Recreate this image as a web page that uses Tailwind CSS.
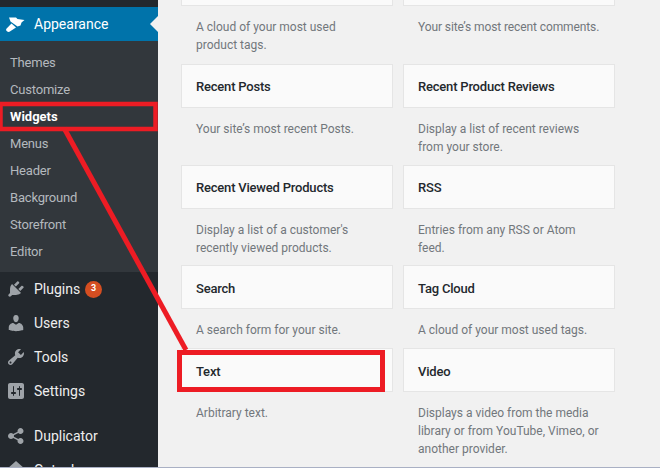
<!DOCTYPE html>
<html><head><meta charset="utf-8"><script src="https://cdn.jsdelivr.net/npm/@tailwindcss/browser@4"></script></head>
<body class="m-0">
<div class="relative flex w-[660px] h-[468px] overflow-hidden bg-[#f1f1f1] font-['Roboto','Noto_Sans',sans-serif]">
  <aside class="w-[158px] shrink-0 bg-[#23282d] text-[14px] text-[#eeeeee]">
    <div class="h-[7px]"></div>
    <div class="relative flex items-center h-[34px] bg-[#0073aa] text-white">
      <svg class="ml-[6px] w-[20px] h-[20px]" viewBox="0 0 20 20" fill="#fff"><path d="M3 3.5 L10 3.5 L11.5 5 L18.5 6 L15.5 8.5 L14.5 11.5 L11.5 12.5 L4.5 7.5 Z"/><path d="M5.5 9.5 L10 13.5 L3.5 17.8 C1.8 18.4 -0.2 17 0.2 15 Z"/></svg>
      <span class="ml-[8px]">Appearance</span>
      <span class="absolute right-0 top-[9px] w-0 h-0 border-y-[8px] border-y-transparent border-r-[8px] border-r-[#f1f1f1]"></span>
    </div>
    <div class="h-[231px] bg-[#32373c] pt-[8px] text-[13px] tracking-[-0.2px] text-[#b4b9be]">
      <div class="h-[27px] pl-[10px] leading-[27px]">Themes</div>
      <div class="h-[27px] pl-[10px] leading-[27px]">Customize</div>
      <div class="h-[27px] pl-[10px] leading-[27px] font-bold tracking-normal text-white">Widgets</div>
      <div class="h-[27px] pl-[10px] leading-[27px]">Menus</div>
      <div class="h-[27px] pl-[10px] leading-[27px]">Header</div>
      <div class="h-[27px] pl-[10px] leading-[27px]">Background</div>
      <div class="h-[27px] pl-[10px] leading-[27px]">Storefront</div>
      <div class="h-[27px] pl-[10px] leading-[27px]">Editor</div>
    </div>
    <div>
      <div class="flex items-center h-[34px]">
        <svg class="ml-[6px] w-[20px] h-[20px]" viewBox="0 0 20 20" fill="#9ea3a8"><path d="M13.11 4.36L9.87 7.6 8 5.73l3.24-3.24c.35-.34 1.05-.2 1.56.32.52.51.66 1.21.31 1.55zm-8 1.77l.91-1.12 9.01 9.01-1.19.84c-.71.71-2.63 1.16-3.82 1.16H6.14L4.9 17.26c-.59.59-1.54.59-2.12 0-.59-.58-.59-1.53 0-2.12l1.24-1.24v-3.88c0-1.13.4-3.19 1.09-3.89zm7.26 3.97l3.24-3.24c.34-.35 1.04-.21 1.55.31.52.51.66 1.21.31 1.55l-3.24 3.25z"/></svg>
        <span class="ml-[8px]">Plugins</span>
        <span class="ml-[5px] flex items-center justify-center w-[17px] h-[17px] rounded-full bg-[#d54e21] text-white text-[9px] font-bold">3</span>
      </div>
      <div class="flex items-center h-[34px]">
        <svg class="ml-[6px] w-[20px] h-[20px]" viewBox="0 0 20 20" fill="#9ea3a8"><path d="M10 9.25c-2.27 0-2.73-3.44-2.73-3.44C7 4.02 7.82 2 9.97 2c2.16 0 2.98 2.02 2.71 3.81 0 0-.41 3.44-2.68 3.44zm0 2.57L12.72 10c2.39 0 4.52 2.33 4.52 4.53v2.49s-3.65 1.13-7.24 1.13c-3.65 0-7.24-1.13-7.24-1.13v-2.49c0-2.25 1.94-4.48 4.47-4.48z"/></svg>
        <span class="ml-[8px]">Users</span>
      </div>
      <div class="flex items-center h-[34px]">
        <svg class="ml-[6px] w-[20px] h-[20px]" viewBox="0 0 20 20" fill="#9ea3a8"><path d="M16.68 9.77c-1.34 1.34-3.3 1.67-4.95.99l-5.41 6.52c-.99.99-2.59.99-3.58 0s-.99-2.59 0-3.57l6.52-5.42c-.68-1.65-.35-3.61.99-4.95 1.28-1.28 3.12-1.62 4.72-1.06l-2.89 2.89 2.82 2.82 2.86-2.87c.53 1.58.18 3.39-1.08 4.65zM3.81 16.21c.4.39 1.04.39 1.43 0 .4-.4.4-1.04 0-1.43-.39-.4-1.03-.4-1.43 0-.39.39-.39 1.03 0 1.43z"/></svg>
        <span class="ml-[8px]">Tools</span>
      </div>
      <div class="flex items-center h-[34px]">
        <svg class="ml-[6px] w-[20px] h-[20px]" viewBox="0 0 20 20" fill="#9ea3a8"><path d="M18 16V4c0-1.1-.9-2-2-2H4c-1.1 0-2 .9-2 2v12c0 1.1.9 2 2 2h12c1.1 0 2-.9 2-2zM8 11h1c.55 0 1 .45 1 1s-.45 1-1 1H8v1.5c0 .28-.22.5-.5.5s-.5-.22-.5-.5V13H6c-.55 0-1-.45-1-1s.45-1 1-1h1V5.5c0-.28.22-.5.5-.5s.5.22.5.5V11zm5-2h-1c-.55 0-1-.45-1-1s.45-1 1-1h1V5.5c0-.28.22-.5.5-.5s.5.22.5.5V7h1c.55 0 1 .45 1 1s-.45 1-1 1h-1v5.5c0 .28-.22.5-.5.5s-.5-.22-.5-.5V9z"/></svg>
        <span class="ml-[8px]">Settings</span>
      </div>
      <div class="h-[11px]"></div>
      <div class="flex items-center h-[34px]">
        <svg class="ml-[6px] w-[20px] h-[20px]" viewBox="0 0 20 20" fill="#9ea3a8"><path d="M14.5 12q1.24 0 2.12.88T17.5 15t-.88 2.12-2.12.88-2.12-.88T11.5 15q0-.34.09-.69l-4.38-2.3Q6.32 13 5 13q-1.24 0-2.12-.88T2 10t.88-2.12T5 7q1.3 0 2.21.99l4.38-2.3q-.09-.35-.09-.69 0-1.24.88-2.12T14.5 2t2.12.88T17.5 5t-.88 2.12T14.5 8q-1.3 0-2.21-.99l-4.38 2.3Q8 9.66 8 10t-.09.69l4.38 2.3Q13.2 12 14.5 12z"/></svg>
        <span class="ml-[8px]">Duplicator</span>
      </div>
      <div class="flex items-center h-[34px]">
        <svg class="ml-[6px] w-[20px] h-[20px]" viewBox="0 0 20 20" fill="#9ea3a8"><path d="M10 1 L19 9 V19 H1 V9 Z"/></svg>
        <span class="ml-[8px]">Gutenberg</span>
      </div>
    </div>
  </aside>
  <main class="flex-1 pl-[23px] text-[12px] leading-[18px] text-[#72777c]">
    <div class="-mt-[38px] grid grid-cols-[212px_212px] grid-rows-[102px_101px_100px_83px_auto] gap-x-[10px]">
      <div><div class="h-[44px] bg-[#fafafa] border border-[#e5e5e5]"></div><p class="mt-[12px] px-[15px]">A cloud of your most used<br>product tags.</p></div>
      <div><div class="h-[44px] bg-[#fafafa] border border-[#e5e5e5]"></div><p class="mt-[12px] pl-[15px] whitespace-nowrap tracking-[-0.1px]">Your site’s most recent comments.</p></div>

      <div><div class="h-[44px] flex items-center pl-[14px] pr-[15px] pt-[2px] bg-[#fafafa] border border-[#e5e5e5] text-[13px] tracking-[-0.2px] font-medium text-[#23282d]">Recent Posts</div><p class="mt-[12px] px-[15px]">Your site’s most recent Posts.</p></div>
      <div><div class="h-[44px] flex items-center pl-[14px] pr-[15px] pt-[2px] bg-[#fafafa] border border-[#e5e5e5] text-[13px] tracking-[-0.2px] font-medium text-[#23282d]">Recent Product Reviews</div><p class="mt-[12px] px-[15px]">Display a list of recent reviews<br>from your store.</p></div>

      <div><div class="h-[44px] flex items-center pl-[14px] pr-[15px] pt-[2px] bg-[#fafafa] border border-[#e5e5e5] text-[13px] tracking-[-0.2px] font-medium text-[#23282d]">Recent Viewed Products</div><p class="mt-[12px] px-[15px]">Display a list of a customer's<br>recently viewed products.</p></div>
      <div><div class="h-[44px] flex items-center pl-[14px] pr-[15px] pt-[2px] bg-[#fafafa] border border-[#e5e5e5] text-[13px] tracking-[-0.2px] font-medium text-[#23282d]">RSS</div><p class="mt-[12px] px-[15px]">Entries from any RSS or Atom<br>feed.</p></div>

      <div><div class="h-[44px] flex items-center pl-[14px] pr-[15px] pt-[4px] bg-[#fafafa] border border-[#e5e5e5] text-[13px] tracking-[-0.2px] font-medium text-[#23282d]">Search</div><p class="mt-[12px] px-[15px]">A search form for your site.</p></div>
      <div><div class="h-[44px] flex items-center pl-[14px] pr-[15px] pt-[4px] bg-[#fafafa] border border-[#e5e5e5] text-[13px] tracking-[-0.2px] font-medium text-[#23282d]">Tag Cloud</div><p class="mt-[12px] px-[15px]">A cloud of your most used tags.</p></div>

      <div><div class="h-[44px] flex items-center pl-[14px] pr-[15px] pt-[4px] bg-[#fafafa] border border-[#e5e5e5] text-[13px] tracking-[-0.2px] font-medium text-[#23282d]">Text</div><p class="mt-[12px] px-[15px]">Arbitrary text.</p></div>
      <div><div class="h-[44px] flex items-center pl-[14px] pr-[15px] pt-[4px] bg-[#fafafa] border border-[#e5e5e5] text-[13px] tracking-[-0.2px] font-medium text-[#23282d]">Video</div><p class="mt-[12px] px-[15px]">Displays a video from the media<br>library or from YouTube, Vimeo, or<br>another provider.</p></div>
    </div>
  </main>
  <svg class="absolute inset-0 w-[660px] h-[468px] pointer-events-none" viewBox="0 0 660 468" fill="none" stroke="#ed1c24" stroke-width="5">
    <rect x="0.5" y="104" width="155" height="25" stroke-width="4.5"/>
    <rect x="179.5" y="352.5" width="203" height="37"/>
    <path d="M64 128 L186 350"/>
  </svg>
  <div class="absolute left-0 right-0 bottom-0 h-[1px] bg-[#a9b0c4]"></div>
</div>
</body></html>
